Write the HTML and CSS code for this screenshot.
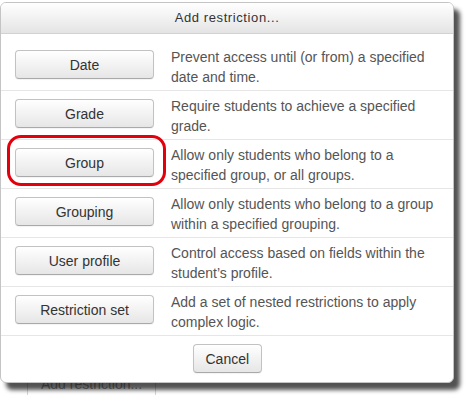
FILE: index.html
```html
<!DOCTYPE html>
<html>
<head>
<meta charset="utf-8">
<link rel="stylesheet" href="styles.css">
</head>
<body>
<div class="dialog">
  <div class="dialog-header">Add restriction...</div>
  <div class="dialog-body">
    <div class="option">
      <button class="btn btn-option">Date</button>
      <div class="desc">Prevent access until (or from) a specified date and time.</div>
    </div>
    <div class="option">
      <button class="btn btn-option">Grade</button>
      <div class="desc">Require students to achieve a specified grade.</div>
    </div>
    <div class="option">
      <button class="btn btn-option">Group</button>
      <div class="desc">Allow only students who belong to a specified group, or all groups.</div>
      <span class="highlight"></span>
    </div>
    <div class="option">
      <button class="btn btn-option">Grouping</button>
      <div class="desc">Allow only students who belong to a group within a specified grouping.</div>
    </div>
    <div class="option">
      <button class="btn btn-option">User profile</button>
      <div class="desc">Control access based on fields within the student’s profile.</div>
    </div>
    <div class="option">
      <button class="btn btn-option">Restriction set</button>
      <div class="desc">Add a set of nested restrictions to apply complex logic.</div>
    </div>
  </div>
  <div class="dialog-footer">
    <button class="btn btn-cancel">Cancel</button>
  </div>
</div>
<div class="behind">
  <span class="behind-btn">Add restriction...</span>
</div>
</body>
</html>
```

FILE: styles.css
```css
html, body {
  margin: 0;
  padding: 0;
  background: #fff;
  font-family: "Liberation Sans", Arial, sans-serif;
}

.dialog {
  position: relative;
  z-index: 1;
  box-sizing: border-box;
  width: 454px;
  margin-top: 2px;
  background: #fff;
  border: 1px solid #c4c4c4;
  border-radius: 6px;
  box-shadow: 6px 7px 4px rgba(0, 0, 0, 0.68);
}

.dialog-header {
  height: 30px;
  line-height: 30px;
  text-align: center;
  font-size: 13px;
  letter-spacing: 0.6px;
  color: #333;
  background: linear-gradient(#ffffff, #e4e4e4);
  border-bottom: 1px solid #d2d2d2;
  border-radius: 5px 5px 0 0;
}

.dialog-body {
  padding-top: 8px;
}

.option {
  position: relative;
  display: flex;
  align-items: flex-start;
  gap: 17px;
  padding: 5px 8px 3px 14px;
  border-bottom: 1px solid #e6e6e6;
}

.btn {
  box-sizing: border-box;
  height: 29px;
  padding: 0 12px;
  font-family: "Liberation Sans", Arial, sans-serif;
  font-size: 14px;
  color: #333;
  background: linear-gradient(#ffffff, #e6e6e6);
  border: 1px solid #c2c2c2;
  border-bottom-color: #a9a9a9;
  border-radius: 4px;
  box-shadow: 0 1px 1px rgba(0, 0, 0, 0.05);
}

.btn-option {
  flex: none;
  width: 139px;
  margin-top: 3px;
}

.desc {
  flex: 1;
  font-size: 14px;
  line-height: 20px;
  color: #555;
}

.highlight {
  position: absolute;
  left: 6px;
  top: -5px;
  width: 159px;
  height: 51px;
  box-sizing: border-box;
  border: 3px solid #e3000b;
  border-radius: 14px;
  pointer-events: none;
}

.dialog-footer {
  padding: 8px 0 9px;
  text-align: center;
}

.btn-cancel {
  width: 69px;
}

.behind {
  margin-top: -20px;
  padding-left: 27px;
}

.behind-btn {
  display: inline-block;
  box-sizing: border-box;
  width: 129px;
  height: 32px;
  padding: 11px 0 0 13px;
  line-height: 20px;
  font-size: 14px;
  color: #9a9a9a;
  border-left: 1px solid #d6d6d6;
  border-right: 1px solid #d6d6d6;
}
```
